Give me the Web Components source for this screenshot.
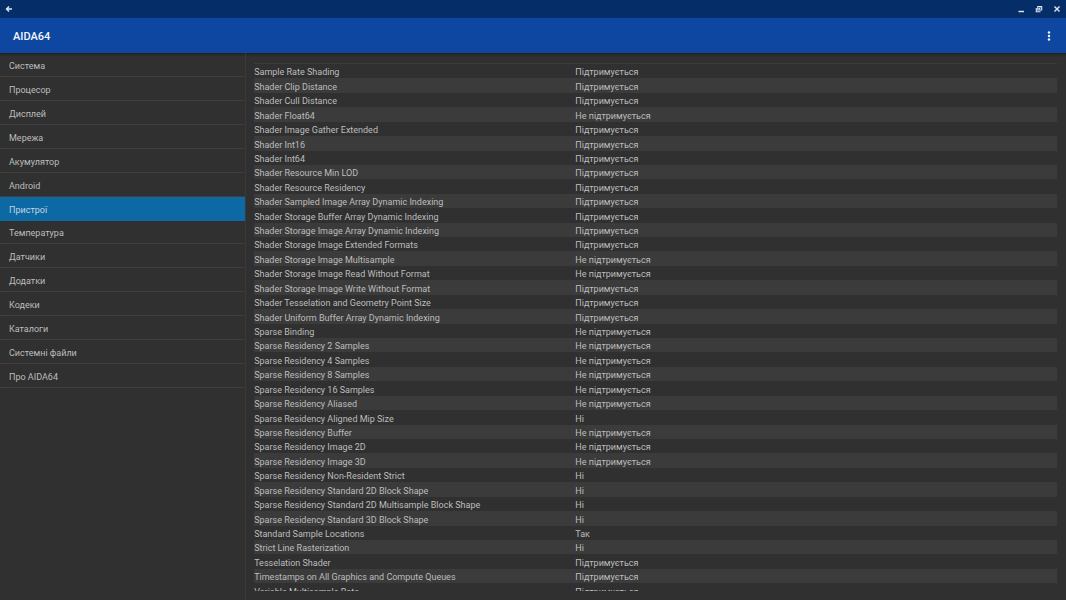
<!DOCTYPE html>
<html lang="uk">
<head>
<meta charset="utf-8">
<meta name="viewport" content="width=device-width, initial-scale=1">
<title>AIDA64</title>
<style>
  html, body { height: 100%; margin: 0; }
  body { background: #303030; color: #bdbdbd; font: 9px/12px Roboto, "Noto Sans", sans-serif; overflow: hidden; }
</style>
</head>
<body>
<aida-app>
  <window-bar slot="chrome"></window-bar>
  <app-bar slot="chrome">AIDA64</app-bar>
  <side-nav slot="nav">
    <nav-item>Система</nav-item>
    <nav-item>Процесор</nav-item>
    <nav-item>Дисплей</nav-item>
    <nav-item>Мережа</nav-item>
    <nav-item>Акумулятор</nav-item>
    <nav-item>Android</nav-item>
    <nav-item selected>Пристрої</nav-item>
    <nav-item>Температура</nav-item>
    <nav-item>Датчики</nav-item>
    <nav-item>Додатки</nav-item>
    <nav-item>Кодеки</nav-item>
    <nav-item>Каталоги</nav-item>
    <nav-item>Системні файли</nav-item>
    <nav-item>Про AIDA64</nav-item>
  </side-nav>
  <feature-table></feature-table>
</aida-app>

<script>
const define = (name, html, setup) => {
  const template = document.createElement('template');
  template.innerHTML = html;
  customElements.define(name, class extends HTMLElement {
    constructor() {
      super();
      this.attachShadow({ mode: 'open' }).append(template.content.cloneNode(true));
    }
    connectedCallback() {
      if (setup) setup(this, this.shadowRoot);
    }
  });
};

define('aida-app', `
  <style>
    :host { display: flex; flex-direction: column; height: 100vh; }
    header { flex: none; }
    .body { flex: 1; min-height: 0; display: grid; grid-template-columns: 23% 1fr; box-shadow: inset 0 3px 3px -2px #1c1c1c; }
    main { min-width: 0; min-height: 0; display: flex; padding: 10px 9px 9px 8px; border-left: 1px solid #393939; }
    main ::slotted(*) { flex: 1; min-width: 0; }
  </style>
  <header><slot name="chrome"></slot></header>
  <div class="body">
    <slot name="nav"></slot>
    <main><slot></slot></main>
  </div>`);

define('window-bar', `
  <style>
    :host { display: flex; justify-content: space-between; height: 18px; background: #052e68; color: #dfe8f4; }
    div { display: flex; }
    button { display: grid; place-items: center; width: 18px; height: 18px; padding: 0; border: 0; background: none; color: inherit; }
    svg { display: block; width: 8px; height: 8px; fill: none; stroke: currentColor; stroke-width: 1.4; }
  </style>
  <div>
    <button aria-label="Назад"><svg viewBox="0 0 8 8"><path d="M7 4H1.6M4 1.5L1.5 4L4 6.500"/></svg></button>
  </div>
  <div>
    <button aria-label="Згорнути"><svg viewBox="0 0 8 8"><path d="M1.500 6.500H7"/></svg></button>
    <button aria-label="Відновити"><svg viewBox="0 0 8 8"><path d="M2.800 1.500H6.700V5H2.800ZM1.300 3V6.700H5.500M3.800 4L5.500 2.500" style="stroke-width:1.1"/></svg></button>
    <button aria-label="Закрити"><svg viewBox="0 0 8 8"><path d="M1.500 1.500L6.500 6.500M6.500 1.500L1.500 6.500"/></svg></button>
  </div>`);

define('app-bar', `
  <style>
    :host { display: flex; align-items: center; justify-content: space-between; height: 35px; padding: 0 8px 0 13px; background: #0d47a1; color: #f4f7fb; }
    h1 { margin: 0; padding-top: 2px; font-size: 11px; line-height: 14px; font-weight: 500; }
    button { display: grid; place-items: center; width: 18px; height: 18px; padding: 0; border: 0; background: none; color: inherit; }
    svg { display: block; width: 4px; height: 10px; fill: currentColor; }
  </style>
  <h1><slot></slot></h1>
  <button aria-label="Інші параметри"><svg viewBox="0 0 4 10"><circle cx="2" cy="1.500" r="1.200"/><circle cx="2" cy="5" r="1.200"/><circle cx="2" cy="8.500" r="1.200"/></svg></button>`);

define('side-nav', `
  <style>
    :host { display: block; }
    nav { display: grid; grid-auto-rows: 1fr; height: 335px; }
  </style>
  <nav aria-label="Розділи"><slot></slot></nav>`);

define('nav-item', `
  <style>
    :host { display: grid; border-bottom: 1px solid #404040; }
    :host([selected]) { background: #0c69a3; border-color: #0c69a3; color: #c3d6e2; }
    a { display: flex; align-items: center; padding: 3px 9px 0; color: inherit; text-decoration: none; }
  </style>
  <a href="#"><slot></slot></a>`, (host, root) => {
    if (host.hasAttribute('selected')) root.querySelector('a').setAttribute('aria-current', 'page');
  });

const YES = 'Підтримується';
const NO = 'Не підтримується';
const FEATURES = [
  ['Sample Rate Shading', YES],
  ['Shader Clip Distance', YES],
  ['Shader Cull Distance', YES],
  ['Shader Float64', NO],
  ['Shader Image Gather Extended', YES],
  ['Shader Int16', YES],
  ['Shader Int64', YES],
  ['Shader Resource Min LOD', YES],
  ['Shader Resource Residency', YES],
  ['Shader Sampled Image Array Dynamic Indexing', YES],
  ['Shader Storage Buffer Array Dynamic Indexing', YES],
  ['Shader Storage Image Array Dynamic Indexing', YES],
  ['Shader Storage Image Extended Formats', YES],
  ['Shader Storage Image Multisample', NO],
  ['Shader Storage Image Read Without Format', NO],
  ['Shader Storage Image Write Without Format', YES],
  ['Shader Tesselation and Geometry Point Size', YES],
  ['Shader Uniform Buffer Array Dynamic Indexing', YES],
  ['Sparse Binding', NO],
  ['Sparse Residency 2 Samples', NO],
  ['Sparse Residency 4 Samples', NO],
  ['Sparse Residency 8 Samples', NO],
  ['Sparse Residency 16 Samples', NO],
  ['Sparse Residency Aliased', NO],
  ['Sparse Residency Aligned Mip Size', 'Ні'],
  ['Sparse Residency Buffer', NO],
  ['Sparse Residency Image 2D', NO],
  ['Sparse Residency Image 3D', NO],
  ['Sparse Residency Non-Resident Strict', 'Ні'],
  ['Sparse Residency Standard 2D Block Shape', 'Ні'],
  ['Sparse Residency Standard 2D Multisample Block Shape', 'Ні'],
  ['Sparse Residency Standard 3D Block Shape', 'Ні'],
  ['Standard Sample Locations', 'Так'],
  ['Strict Line Rasterization', 'Ні'],
  ['Tesselation Shader', YES],
  ['Timestamps on All Graphics and Compute Queues', YES],
  ['Variable Multisample Rate', YES]
];

define('feature-table', `
  <style>
    :host { display: block; overflow: hidden; border-top: 1px solid #3c3c3c; }
    table { width: 100%; height: 534px; table-layout: fixed; border-collapse: collapse; }
    th, td { padding: 2px 0 0; line-height: 12px; text-align: left; font-weight: 400; vertical-align: bottom; white-space: nowrap; }
    th { width: 40%; }
    tr:nth-child(even) { background: #3b3b3b; }
  </style>
  <table><tbody></tbody></table>`, (host, root) => {
    root.querySelector('tbody').replaceChildren(...FEATURES.map(([name, value]) => {
      const row = document.createElement('tr');
      const head = document.createElement('th');
      head.scope = 'row';
      head.textContent = name;
      const cell = document.createElement('td');
      cell.textContent = value;
      row.append(head, cell);
      return row;
    }));
  });
</script>
</body>
</html>
